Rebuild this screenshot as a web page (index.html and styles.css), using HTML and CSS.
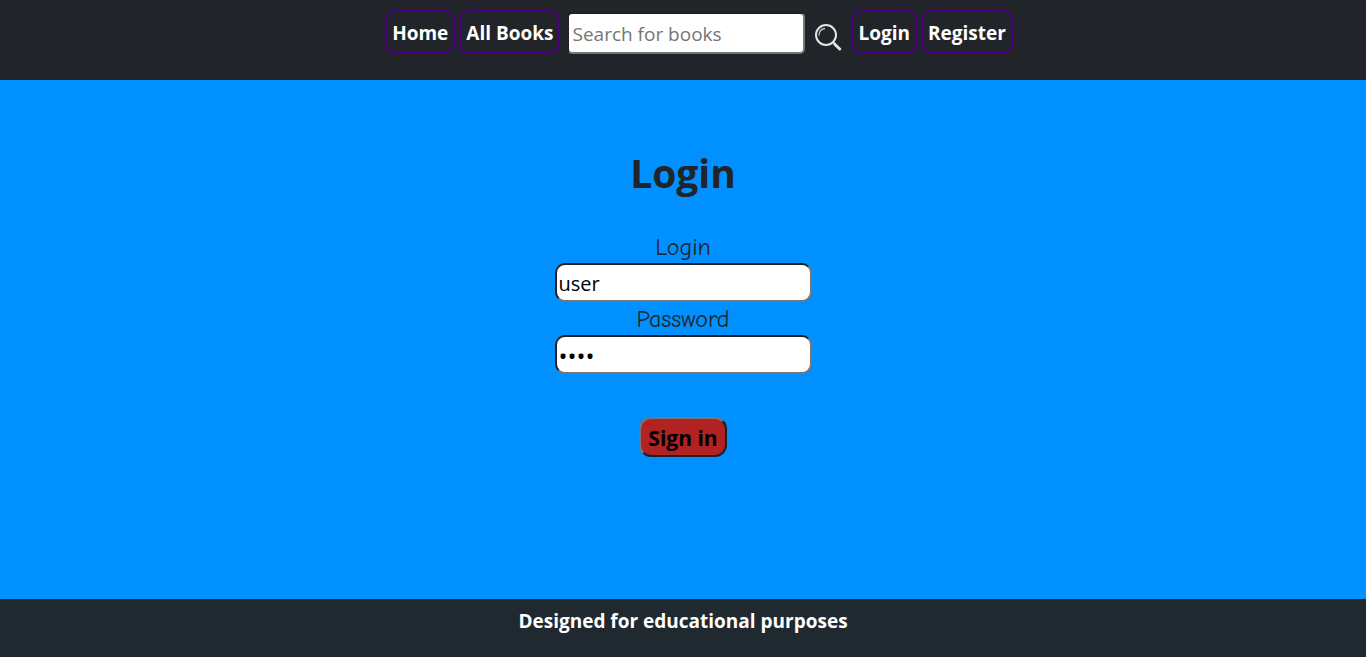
FILE: index.html
```html
<!DOCTYPE html>
<html lang="en">
<head>
<meta charset="utf-8">
<title>Login</title>
<link rel="stylesheet" href="styles.css">
</head>
<body>
<header class="site-header">
  <nav class="nav">
    <a class="nav-link" href="#">Home</a>
    <a class="nav-link" href="#">All Books</a>
    <form class="search">
      <input class="search-input" type="text" placeholder="Search for books" aria-label="Search for books">
      <button class="search-button" type="button" aria-label="Search">
        <svg width="28" height="28" viewBox="0 0 28 28" fill="none" stroke="#e4e4e4">
          <circle cx="12" cy="12" r="10" stroke-width="2"/>
          <path d="M5 12.500c0-4 2.500-6.500 6-7" stroke-width="1.400" stroke="#bbb"/>
          <path d="M19 19l2.500 2.500" stroke-width="2"/>
          <path d="M21 21.500l4.700 4.500" stroke-width="3" stroke-linecap="round"/>
        </svg>
      </button>
    </form>
    <a class="nav-link" href="#">Login</a>
    <a class="nav-link" href="#">Register</a>
  </nav>
</header>
<main class="content">
  <h1 class="title">Login</h1>
  <form class="login-form">
    <label class="label" for="login">Login</label>
    <input class="field" id="login" type="text" value="user">
    <label class="label" for="password">Password</label>
    <input class="field field-password" id="password" type="password" value="user">
    <button class="submit" type="button">Sign in</button>
  </form>
</main>
<footer class="site-footer">Designed for educational purposes</footer>
</body>
</html>
```
FILE: styles.css
```css
* { box-sizing: border-box; }

body {
  margin: 0;
  min-height: 100vh;
  display: flex;
  flex-direction: column;
  font-family: "Segoe UI", "Open Sans", "Noto Sans", sans-serif;
  color: #212529;
  background: #0090ff;
}

.site-header {
  padding: 10px 0 26px 32px;
  background: #212529;
}

.nav {
  display: flex;
  justify-content: center;
  gap: 4px;
}

.nav-link {
  padding: 6px 5px 4px;
  border: 2px solid #4b0082;
  border-radius: 10px;
  color: #fff;
  font-size: 19px;
  font-weight: 700;
  line-height: 30px;
  text-decoration: none;
}

.search {
  display: flex;
  align-items: flex-end;
  gap: 9px;
  padding: 0 5px 0 3px;
}

.search-input {
  width: 238px;
  height: 42px;
  padding: 2px 3px 1px;
  border: 2px inset #767676;
  border-radius: 5px;
  background: #fff;
  font: 19px "Segoe UI", "Open Sans", "Noto Sans", sans-serif;
}

.search-input::placeholder { color: #757575; }

.search-button {
  display: flex;
  padding: 0 0 3px;
  border: 0;
  background: none;
}

.content {
  flex: 1;
  display: flex;
  flex-direction: column;
  align-items: center;
  padding-top: 69px;
}

.title {
  margin: 0 0 34px;
  font-size: 39px;
  line-height: 48px;
}

.login-form {
  display: flex;
  flex-direction: column;
  align-items: center;
}

.label {
  font: 24px/32px "Comic Sans MS", "Comic Neue", "Noto Sans", cursive;
}

.field {
  width: 257px;
  height: 39px;
  margin-bottom: 1px;
  padding: 2px 2px 1px;
  border: 2px inset #767676;
  border-radius: 10px;
  background: #fff;
  color: #000;
  font: 20px "Segoe UI", "Open Sans", "Noto Sans", sans-serif;
}

.field-password { font-size: 24px; }

.submit {
  height: 40px;
  margin-top: 42px;
  padding: 2px 7px 1px;
  border: 2px outset #767676;
  border-radius: 12px;
  background: #b22222;
  color: #000;
  font: 700 21px "Segoe UI", "Open Sans", "Noto Sans", sans-serif;
}

.site-footer {
  padding: 7px 0 21px;
  background: #212930;
  color: #fff;
  font-size: 19px;
  font-weight: 700;
  line-height: 30px;
  text-align: center;
}
```
